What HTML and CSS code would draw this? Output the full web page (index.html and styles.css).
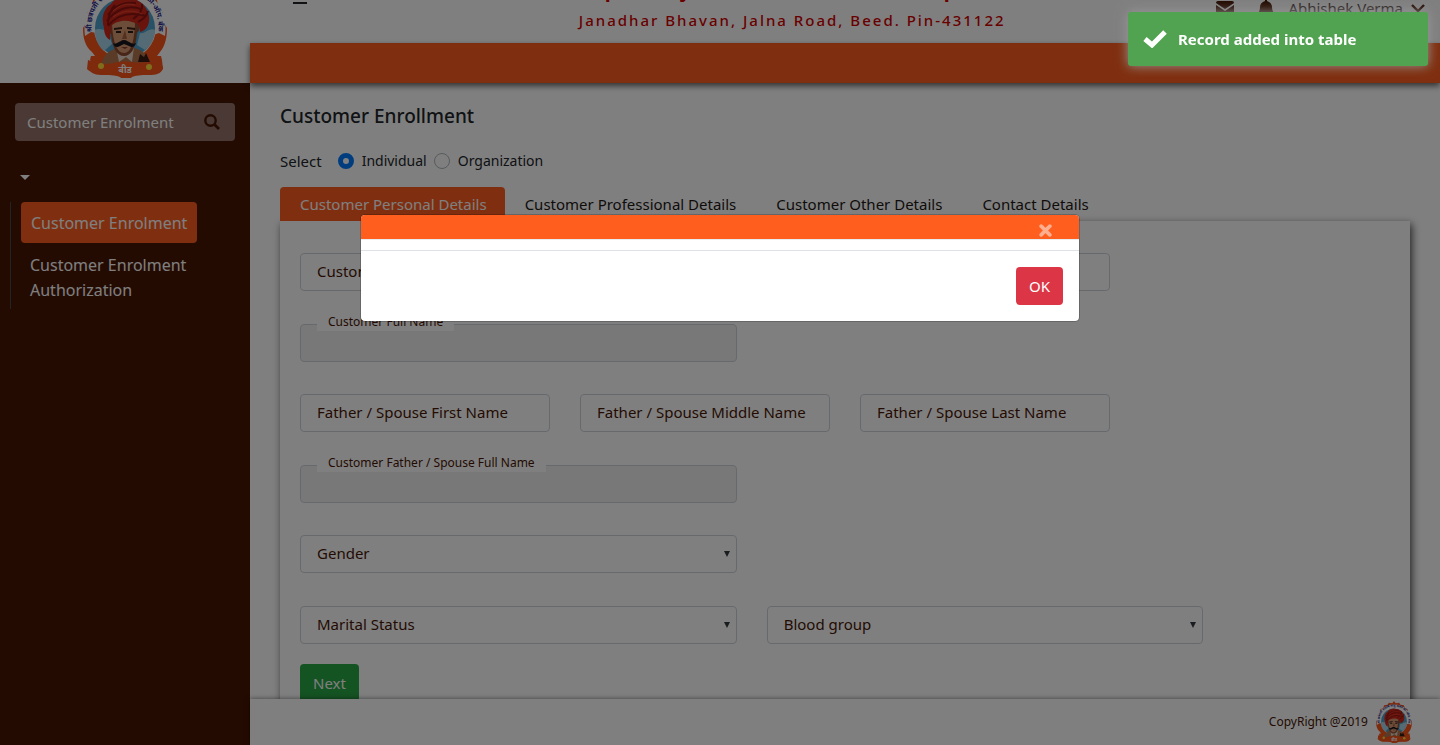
FILE: index.html
```html
<!DOCTYPE html>
<html lang="en">
<head>
<meta charset="utf-8">
<title>Customer Enrollment</title>
<link rel="stylesheet" href="styles.css">
</head>
<body>
<svg class="defs" aria-hidden="true">
  <symbol id="emblem" viewBox="0 0 84 98">
    <path d="M42 0l4 5 8-1 3 5 8 1 2 6 7 4 1 7 5 6-1 7 5 8c0 10-2 18-7 24l-3 4h4l1 4-2 3 3 4c0 5-5 8-12 8-8 0-13 0-19 2l-2 2h-8l-2-2c-6-2-11-2-19-2-7 0-12-3-12-8l3-4-2-3 1-4h4l-3-4C2 66 0 58 0 48l5-8-1-7 5-6 1-7 7-4 2-6 8-1 3-5 8 1z" fill="#fb541b"/>
    <path d="M2 56C-2 27 17 8 42 8s44 19 40 48l-6-3-6 2c3-25-8-36-28-36S11 30 14 53l-6-1z" fill="#fff"/>
    <circle cx="42" cy="48" r="31" fill="#fff"/>
    <circle cx="42" cy="48" r="30" fill="#4fa3cc"/>
    <path d="M12 50c6-3 9 2 12-1l5 15-8 7c-6-5-9-12-9-21zm60 0c-6-3-11 5-15 3l-3 12 8 5c6-5 10-12 10-20z" fill="#a9d5e8"/>
    <path d="M18 84c3-10 9-14 17-16h16c8 2 12 5 16 14z" fill="#b5774e"/>
    <path d="M33 67l3 15 7-5 6 5 2-15z" fill="#e8d8c8"/>
    <path d="M27 43c0-9 27-9 28 0 2 3 2 8-1 10-1 15-6 23-13 23s-12-8-13-22c-4-2-4-7-1-11z" fill="#8f4d31"/>
    <path d="M29 44c1-9 23-8 23 0-1 18-4 29-11 29S30 63 29 44z" fill="#d99a72"/>
    <path d="M31 48l8-1v2l-8 1zm13-1l8 1v2l-8-1z" fill="#362019"/>
    <path d="M33 51h5v2h-5zm12 0h5v2h-5z" fill="#281a18"/>
    <path d="M42 50l-3 9h5z" fill="#a9603c"/>
    <path d="M41 60c-3 0-4 2-7 3-2 1-3 1-4 0 1 4 4 5 7 3l4-2 5 2c3 2 6 1 7-3-2 1-3 1-5 0-3-1-4-3-7-3z" fill="#17151c"/>
    <path d="M38 67h7l-3 2z" fill="#8a4035"/>
    <path d="M21 48c-3-9-1-19 7-24 3-5 10-7 16-6 12 0 20 8 22 18 1 8-2 14-9 16 0-7-3-9-8-10-8-3-17 0-21 4l-1 14c-4-2-6-7-6-12z" fill="#d2261b"/>
    <path d="M25 35c7-10 18-13 28-12M24 41c8-11 21-17 34-12M25 46c10-13 24-14 38-10M32 25c-5 5-7 11-7 20m25-6c7-5 10-9 9-15M55 42c6-3 9-7 10-11" fill="none" stroke="#8f1511" stroke-width="2"/>
    <path d="M30 31c8-7 15-8 22-6M30 37c9-6 19-8 29-3" fill="none" stroke="#f0442c" stroke-width="1"/>
    <path d="M55 82l2-8 4 3 2-4 4 9z" fill="#3b1d14"/>
    <path d="M5 80c11 5 21 6 26 3 7-2 15-2 22 0 5 3 15 2 26-3l1 9c-7 7-16 4-28 5l-6 3h-8l-6-3c-12-1-21 2-28-5z" fill="#fb541b"/>
    <circle cx="18" cy="86" r="3" fill="#ffdc38"/>
    <circle cx="66" cy="87" r="3" fill="#ffdc38"/>
    <path id="arc" d="M9 52C6 27 22 13 42 13s36 14 33 41" fill="none"/>
    <text class="emblem-ring"><textPath href="#arc">श्री छत्रपती राजर्षि शाहू अर्बन को-ऑप. बँक लि.</textPath></text>
    <text class="emblem-town" x="42" y="93" text-anchor="middle">बीड</text>
  </symbol>
</svg>

<div class="app">
  <aside class="sidebar">
    <div class="brand"><svg class="brand-logo" role="img" aria-label="Bank emblem"><use href="#emblem"/></svg></div>
    <div class="search">
      <input class="search-input" type="text" aria-label="Search menu" value="Customer Enrolment">
      <button class="search-button" type="button" aria-label="Search">
        <svg class="icon" viewBox="0 0 16 16"><circle cx="6.500" cy="6.500" r="5.200" fill="none" stroke="currentColor" stroke-width="2.400"/><path d="M10.500 10.500l4.500 4.500" stroke="currentColor" stroke-width="2.800"/></svg>
      </button>
    </div>
    <button class="menu-toggle" type="button" aria-label="Toggle menu"><svg class="caret" viewBox="0 0 10 5"><path d="M0 0h10L5 5z" fill="currentColor"/></svg></button>
    <nav class="menu">
      <a class="menu-link is-active" href="#">Customer Enrolment</a>
      <a class="menu-link" href="#">Customer Enrolment Authorization</a>
    </nav>
  </aside>

  <div class="page">
    <header class="header">
      <button class="burger" type="button" aria-label="Menu"><span></span><span></span><span></span></button>
      <div class="bank">
        <h1 class="bank-name">Chhatrapati Rajarshi Shahu Urban Co-op Bank Ltd.</h1>
        <p class="bank-address">Janadhar Bhavan, Jalna Road, Beed. Pin-431122</p>
      </div>
      <div class="account">
        <svg class="mail" viewBox="0 0 18 14"><path d="M2 0h14a2 2 0 0 1 2 2L9 8 0 2a2 2 0 0 1 2-2zM0 4l9 6 9-6v8a2 2 0 0 1-2 2H2a2 2 0 0 1-2-2z" fill="currentColor"/></svg>
        <svg class="bell" viewBox="0 0 16 18"><path d="M7 0h2v2c3 1 5 3 5 6 0 3 1 5 2 6v1H0v-1c1-1 2-3 2-6 0-3 2-5 5-6zM6 16h4c0 3-4 3-4 0z" fill="currentColor"/></svg>
        <span class="account-name">Abhishek Verma</span>
        <svg class="chevron" viewBox="0 0 14 9"><path d="M1 1l6 6 6-6" fill="none" stroke="currentColor" stroke-width="2.400"/></svg>
      </div>
    </header>
    <div class="ribbon"></div>

    <main class="content">
      <h2 class="title">Customer Enrollment</h2>
      <div class="kind" role="radiogroup" aria-label="Select">
        <span class="kind-caption">Select</span>
        <label class="radio"><input type="radio" name="kind" checked>Individual</label>
        <label class="radio"><input type="radio" name="kind">Organization</label>
      </div>
      <nav class="tabs">
        <a class="tab is-active" href="#">Customer Personal Details</a>
        <a class="tab" href="#">Customer Professional Details</a>
        <a class="tab" href="#">Customer Other Details</a>
        <a class="tab" href="#">Contact Details</a>
      </nav>
      <form class="card">
        <div class="row">
          <div class="field"><input id="first" type="text"><label for="first">Customer First Name</label></div>
          <div class="field"><input id="middle" type="text"><label for="middle">Customer Middle Name</label></div>
          <div class="field"><input id="last" type="text"><label for="last">Customer Last Name</label></div>
        </div>
        <div class="row">
          <div class="field wide floated"><input id="full" type="text" disabled><label for="full">Customer Full Name</label></div>
        </div>
        <div class="row">
          <div class="field"><input id="ffirst" type="text"><label for="ffirst">Father / Spouse First Name</label></div>
          <div class="field"><input id="fmiddle" type="text"><label for="fmiddle">Father / Spouse Middle Name</label></div>
          <div class="field"><input id="flast" type="text"><label for="flast">Father / Spouse Last Name</label></div>
        </div>
        <div class="row">
          <div class="field wide floated"><input id="ffull" type="text" disabled><label for="ffull">Customer Father / Spouse Full Name</label></div>
        </div>
        <div class="row">
          <div class="field wide"><select id="gender"><option></option></select><label for="gender">Gender</label><svg class="arrow" viewBox="0 0 6 6"><path d="M0 0h6L3 6z" fill="currentColor"/></svg></div>
        </div>
        <div class="row">
          <div class="field wide"><select id="marital"><option></option></select><label for="marital">Marital Status</label><svg class="arrow" viewBox="0 0 6 6"><path d="M0 0h6L3 6z" fill="currentColor"/></svg></div>
          <div class="field wide"><select id="blood"><option></option></select><label for="blood">Blood group</label><svg class="arrow" viewBox="0 0 6 6"><path d="M0 0h6L3 6z" fill="currentColor"/></svg></div>
        </div>
        <button class="button next" type="button">Next</button>
      </form>
    </main>

    <footer class="footer">
      <span>CopyRight @2019</span>
      <svg class="footer-logo" role="img" aria-label="Bank emblem"><use href="#emblem"/></svg>
    </footer>
  </div>
</div>

<div class="backdrop">
  <div class="modal" role="dialog" aria-label="Message">
    <div class="modal-head"><button class="close" type="button" aria-label="Close"><svg class="cross" viewBox="0 0 12 12"><path d="M2 2l8 8M10 2l-8 8" stroke="currentColor" stroke-width="3.400" stroke-linecap="round"/></svg></button></div>
    <div class="modal-body"></div>
    <div class="modal-foot"><button class="button ok" type="button">OK</button></div>
  </div>
</div>

<div class="toast" role="status">
  <svg class="check" viewBox="0 0 24 18"><path d="M2 9l7 6L22 2" fill="none" stroke="currentColor" stroke-width="5"/></svg>
  <span>Record added into table</span>
</div>
</body>
</html>
```
FILE: styles.css
```css
* { box-sizing: border-box; }

body {
  margin: 0;
  color: #212529;
  font: 15px/24px "Noto Sans", "Open Sans", sans-serif;
  overflow: hidden;
}

h1, h2, p { margin: 0; }
a { color: inherit; text-decoration: none; }
button, input, select { font: inherit; margin: 0; }
button { border: 0; background: none; padding: 0; color: inherit; }
svg { display: block; }

.defs { position: absolute; width: 0; height: 0; }
.emblem-ring { font: bold 7px "Noto Sans Devanagari", "Noto Sans", sans-serif; fill: #24248c; }
.emblem-town { font: bold 9px "Noto Sans Devanagari", "Noto Sans", sans-serif; fill: #fff; }

.app { display: flex; height: 100vh; }

/* Sidebar */
.sidebar { flex: none; width: 250px; background: #481604; color: #fff; }
.brand {
  display: flex;
  align-items: flex-end;
  justify-content: center;
  height: 83px;
  padding-bottom: 5px;
  background: #fff;
  overflow: hidden;
}
.brand-logo { flex: none; width: 84px; height: 98px; }
.search {
  display: flex;
  align-items: center;
  height: 38px;
  margin: 20px 15px 0;
  padding: 0 15px 0 12px;
  border-radius: 4px;
  background: #957368;
}
.search-input { flex: 1; width: 100%; min-width: 0; border: 0; padding: 0; background: none; color: #fff; }
.search-button { color: #481604; }
.icon { width: 16px; height: 16px; }
.menu-toggle { display: block; margin: 34px 20px 22px; }
.caret { width: 10px; height: 5px; }
.menu {
  display: flex;
  flex-direction: column;
  align-items: flex-start;
  margin: 0 40px 0 10px;
  padding: 0 0 6px 10px;
  border-left: 1px solid #46494c;
  font-size: 16px;
  line-height: 25px;
}
.menu-link { padding: 10px 9px 0; }
.menu-link.is-active { padding: 9px 10px 7px; border-radius: 4px; background: #ff5e1f; }

/* Header */
.page { display: flex; flex: 1; flex-direction: column; min-width: 0; background: #fff; }
.header {
  display: flex;
  flex: none;
  align-items: flex-end;
  height: 43px;
  padding: 0 15px 0 43px;
  overflow: hidden;
}
.burger { display: grid; gap: 3px; width: 14px; margin-bottom: 39px; }
.burger span { height: 2px; background: #212529; }
.bank { flex: 1; padding: 0 0 11px 61px; color: #d20000; text-align: center; }
.bank-name { font-size: 20px; line-height: 36px; letter-spacing: 1px; }
.bank-address { letter-spacing: 2px; font-weight: 500; }
.account { display: flex; align-items: center; gap: 6px; padding-bottom: 23px; color: #481604; white-space: nowrap; }
.mail { width: 18px; height: 14px; margin-right: 18px; }
.bell { width: 16px; height: 18px; margin-right: 8px; }
.chevron { width: 14px; height: 9px; }
.account-name { margin-right: 2px; color: #50403c; }
.ribbon { flex: none; height: 40px; background: #ff5e1f; box-shadow: 0 3px 6px rgba(0, 0, 0, .6); z-index: 1; }

/* Content */
.content { flex: 1; min-height: 0; padding: 20px 30px 0; overflow: hidden; }
.title { font-size: 19px; font-weight: 500; line-height: 26px; }
.kind { display: flex; align-items: center; gap: 7px; margin: 20px 0 14px; }
.kind-caption { margin-right: 9px; }
.radio { display: flex; align-items: center; gap: 8px; font-size: 14px; }
.radio input { appearance: none; width: 16px; height: 16px; margin: 0; border: 1px solid #adb5bd; border-radius: 50%; }
.radio input:checked { border: 5px solid #007bff; }
.tabs { display: flex; }
.tab { padding: 5px 20px; color: #231815; }
.tab.is-active { padding-right: 18px; border-radius: 4px 4px 0 0; background: #ff5e1f; color: #fff; }
.card { padding: 32px 20px 20px; background: #fff; box-shadow: 2px 3px 8px rgba(0, 0, 0, .7); }
.row { display: grid; grid-template-columns: repeat(12, 1fr); column-gap: 30px; margin-bottom: 32px; }
.row:nth-child(odd) { margin-bottom: 33px; }
.row:nth-last-child(2) { margin-bottom: 20px; }
.field { position: relative; grid-column: span 3; height: 38px; }
.field.wide { grid-column: span 5; }
.field input, .field select {
  display: block;
  width: 100%;
  height: 100%;
  appearance: none;
  border: 1px solid #ced4da;
  border-radius: 4px;
  padding: 0 16px;
  background: #fff;
}
.field input:disabled { background: #f0f0f0; }
.field label {
  position: absolute;
  top: 6px;
  left: 17px;
  color: #481604;
  white-space: nowrap;
  pointer-events: none;
}
.field.floated label { top: -11px; padding: 0 11px; background: #fff; font-size: 12px; line-height: 18px; }
.arrow { position: absolute; top: 16px; right: 7px; width: 6px; height: 6px; color: #343a40; }

.button { height: 38px; padding: 0 13px; border-radius: 4px; color: #fff; }
.next { background: #28a745; }
.ok { background: #dc3545; }

.footer {
  display: flex;
  flex: none;
  align-items: center;
  justify-content: flex-end;
  gap: 8px;
  height: 46px;
  padding-right: 28px;
  background: #fff;
  box-shadow: 0 0 5px rgba(0, 0, 0, .5);
  color: #481604;
  font-size: 12px;
  z-index: 1;
}
.footer-logo { width: 36px; height: 42px; }

/* Overlays */
.backdrop { position: fixed; inset: 0; z-index: 10; background: rgba(0, 0, 0, .5); }
.modal {
  width: 50%;
  margin: 214px auto 0;
  border: 1px solid rgba(0, 0, 0, .2);
  border-radius: 5px;
  background: #fff;
  background-clip: padding-box;
}
.modal-head {
  display: flex;
  justify-content: flex-end;
  height: 25px;
  padding: 9px 27px 0 0;
  border-bottom: 1px solid #e9ecef;
  border-radius: 4px 4px 0 0;
  background: #ff5e1f;
}
.close { height: 13px; color: #ffae8f; }
.cross { width: 13px; height: 13px; }
.modal-body { height: 10px; }
.modal-foot { display: flex; justify-content: flex-end; padding: 16px; border-top: 1px solid #dee2e6; }

.toast {
  position: fixed;
  top: 12px;
  right: 12px;
  z-index: 20;
  display: flex;
  align-items: center;
  gap: 11px;
  width: 300px;
  padding: 15px;
  border-radius: 3px;
  background: #51a351;
  box-shadow: 0 0 12px #999;
  color: #fff;
  font-weight: 700;
}
.check { width: 24px; height: 18px; }
```
